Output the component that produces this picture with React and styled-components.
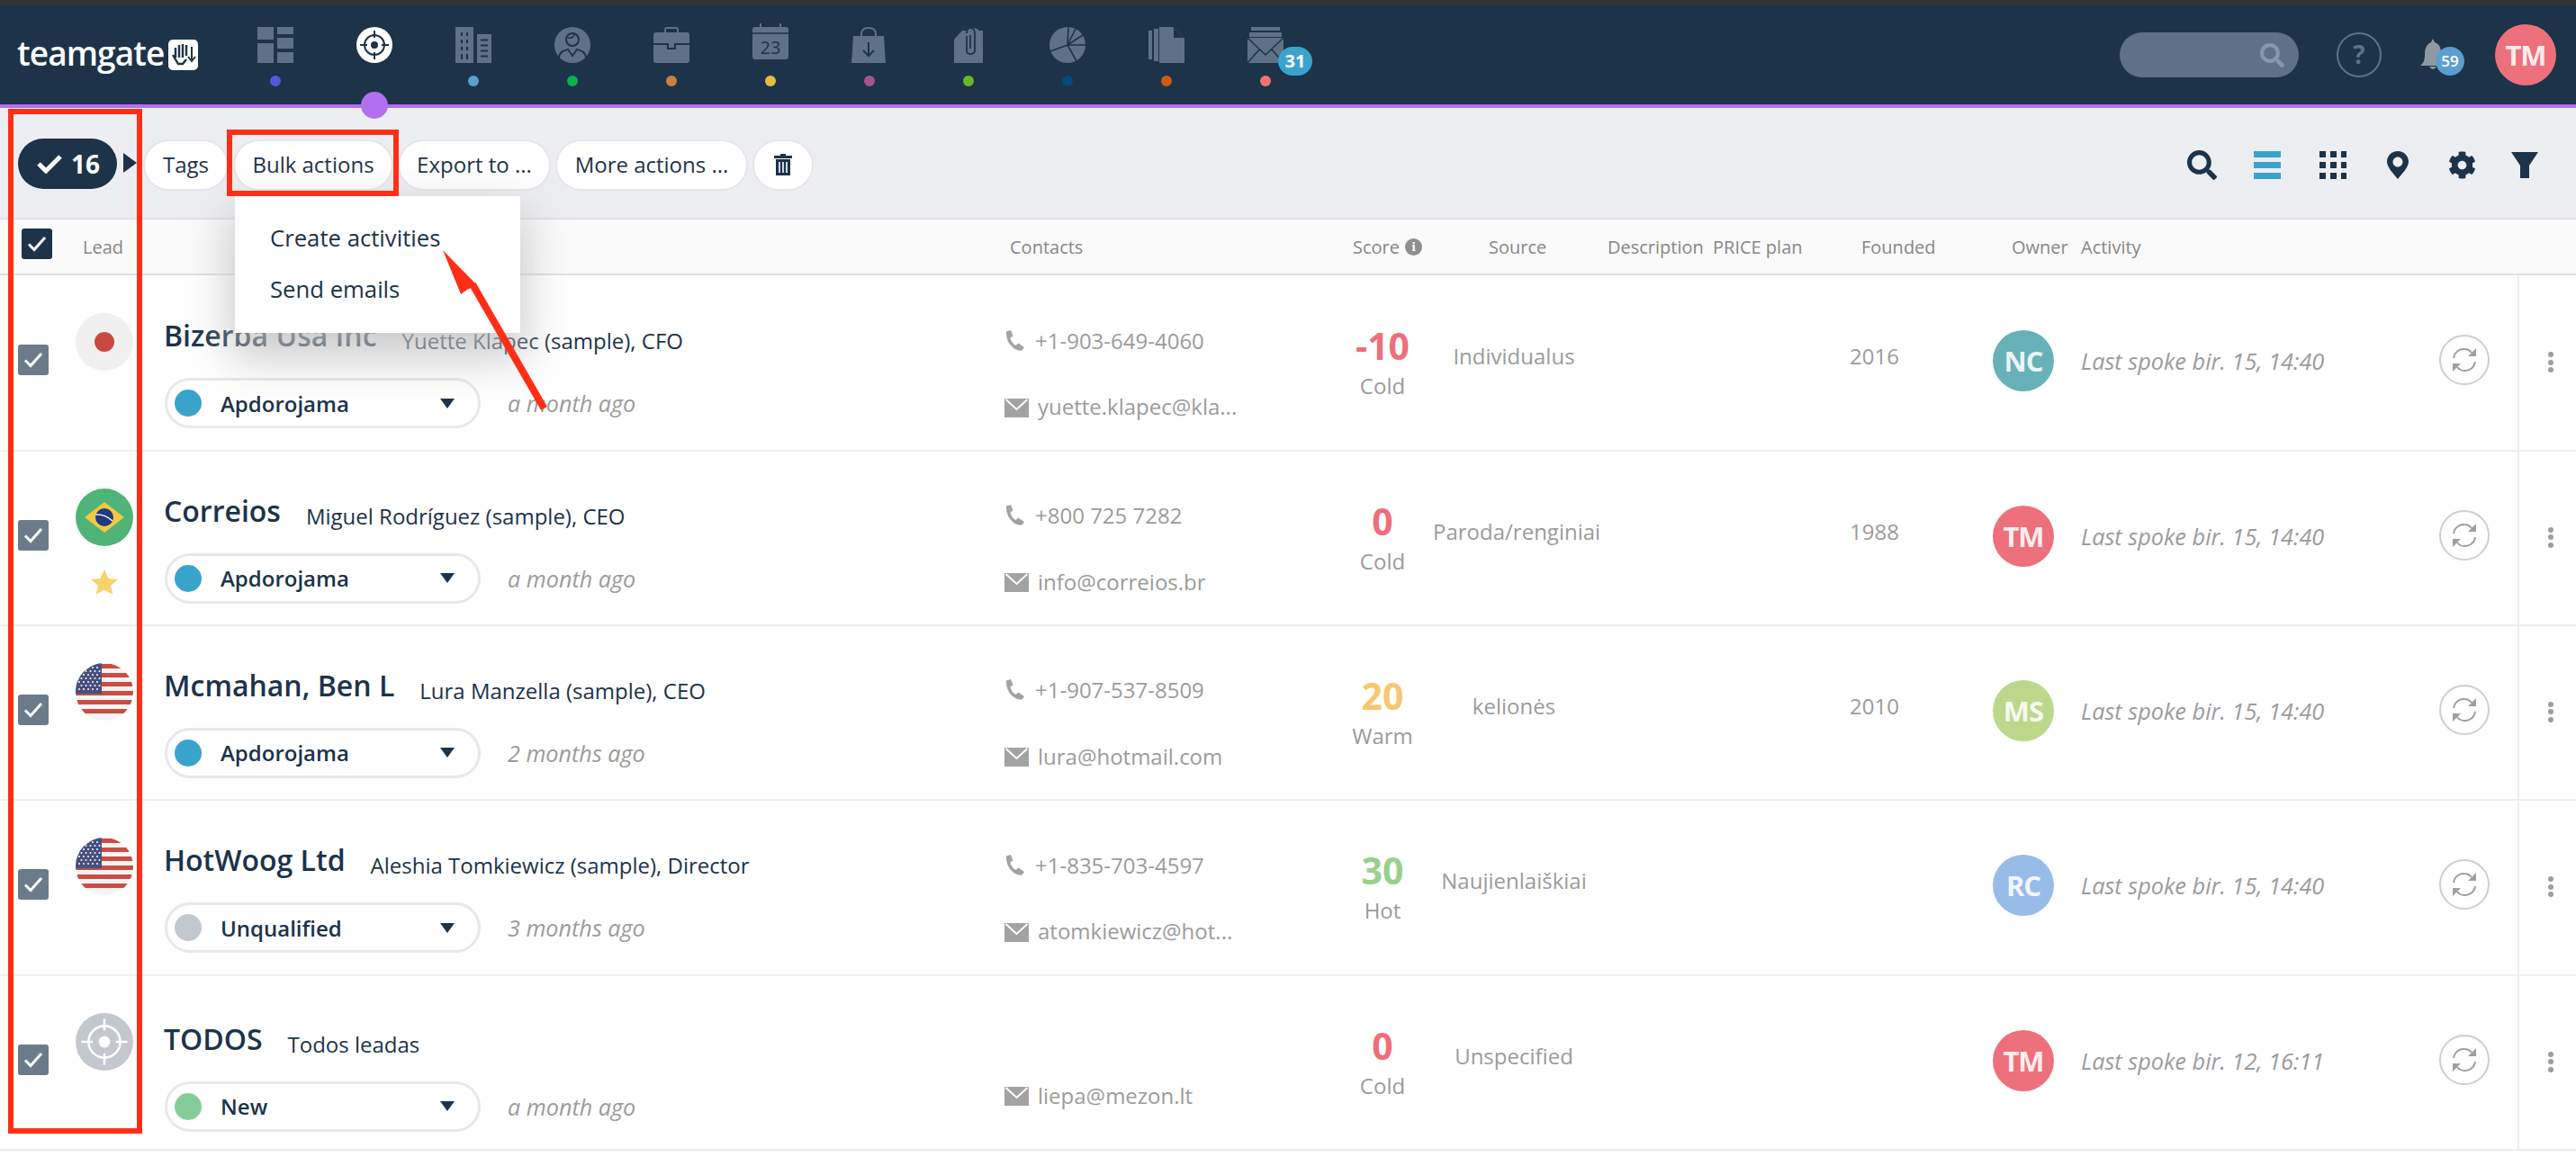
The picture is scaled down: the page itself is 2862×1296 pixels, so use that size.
import React from 'react';
import styled, { createGlobalStyle } from 'styled-components';
import { FaSearch, FaCog } from 'react-icons/fa';

const navy = '#1c3349';
const slate = '#5d7286';
const grey = '#9b9b9b';
const red = '#ff2f17';

const GlobalStyle = createGlobalStyle`
  html, body {
    margin: 0;
    padding: 0;
    background: #fff;
    overflow: hidden;
  }
  body {
    font-family: "Open Sans", "Liberation Sans", sans-serif;
    color: ${navy};
  }
  * { box-sizing: border-box; }
`;

const Page = styled.div`
  position: relative;
  width: 2862px;
  height: 1296px;
  overflow: hidden;
`;

const TopStrip = styled.div`
  height: 6px;
  background: #333;
`;

const Navbar = styled.header`
  height: 114px;
  display: flex;
  align-items: flex-start;
  background: ${navy};
  border-bottom: 4px solid #b26fee;
`;

const Logo = styled.div`
  width: 251px;
  padding: 30px 0 0 19px;
  display: flex;
  align-items: flex-start;
  gap: 5px;
  color: #fff;
  font-family: "Open Sans", sans-serif;
  font-size: 37px;
  font-weight: 600;
  line-height: 46px;
  letter-spacing: -0.9px;
`;

const LogoMark = styled.svg`
  width: 33px;
  height: 34px;
  margin-top: 8px;
  flex: none;
`;

const NavItem = styled.div`
  position: relative;
  width: 110px;
  height: 110px;
  padding-top: 24px;
  display: flex;
  flex-direction: column;
  align-items: center;
`;

const NavIcon = styled.svg`
  width: 40px;
  height: 40px;
  overflow: visible;
  flex: none;
`;

const NavDot = styled.span`
  width: 12px;
  height: 12px;
  margin-top: 14px;
  border-radius: 50%;
  background: ${(p) => p.$color};
`;

const ActiveDot = styled.span`
  position: absolute;
  left: 40px;
  top: 96px;
  width: 30px;
  height: 30px;
  border-radius: 50%;
  background: #b26fee;
  z-index: 3;
`;

const MailBadge = styled.span`
  position: absolute;
  left: 69px;
  top: 46px;
  width: 38px;
  height: 32px;
  border-radius: 16px;
  background: #3aa3cb;
  color: #fff;
  font-size: 20px;
  font-weight: 700;
  line-height: 32px;
  text-align: center;
`;

const NavRight = styled.div`
  margin-left: auto;
  height: 110px;
  padding-right: 22px;
  display: flex;
  align-items: center;
`;

const SearchPill = styled.div`
  width: 199px;
  height: 50px;
  padding-right: 16px;
  display: flex;
  align-items: center;
  justify-content: flex-end;
  border-radius: 25px;
  background: ${slate};
  color: #8798a8;
  font-size: 27px;
`;

const HelpCircle = styled.div`
  width: 50px;
  height: 50px;
  margin-left: 42px;
  border: 2px solid ${slate};
  border-radius: 50%;
  color: ${slate};
  font-size: 28px;
  font-weight: 700;
  line-height: 45px;
  text-align: center;
`;

const BellWrap = styled.div`
  position: relative;
  width: 51px;
  height: 44px;
  margin: 8px 34px 0 41px;
`;

const BellBadge = styled.span`
  position: absolute;
  left: 19px;
  top: 9px;
  width: 32px;
  height: 32px;
  border-radius: 50%;
  background: #5b9fd0;
  color: #fff;
  font-size: 17px;
  font-weight: 600;
  line-height: 32px;
  text-align: center;
`;

const Avatar = styled.div`
  width: 68px;
  height: 68px;
  flex: none;
  border-radius: 50%;
  background: ${(p) => p.$color};
  color: rgba(255, 255, 255, 0.9);
  font-size: 31px;
  font-weight: 700;
  line-height: 68px;
  letter-spacing: -1px;
  text-align: center;
`;

const Toolbar = styled.section`
  position: relative;
  z-index: 2;
  height: 124px;
  padding: 34px 0 0 20px;
  display: flex;
  align-items: flex-start;
  background: #edeef2;
  border-bottom: 2px solid #dfdfe6;
`;

const CountPill = styled.div`
  width: 110px;
  height: 56px;
  padding-left: 20px;
  display: flex;
  align-items: center;
  gap: 9px;
  border-radius: 28px;
  background: ${navy};
  color: #fff;
  font-size: 28px;
  font-weight: 700;
`;

const CountArrow = styled.span`
  width: 0;
  height: 0;
  margin: 16px 9px 0 7px;
  border-top: 11px solid transparent;
  border-bottom: 11px solid transparent;
  border-left: 15px solid ${navy};
`;

const ActionGroup = styled.div`
  margin-top: 3px;
  display: flex;
  gap: 9px;
`;

const ActionWrap = styled.div`
  position: relative;
`;

const ActionButton = styled.div`
  width: ${(p) => p.$width}px;
  height: 53px;
  padding-bottom: 2px;
  display: flex;
  align-items: center;
  justify-content: center;
  border-radius: 27px;
  background: #fff;
  box-shadow: 0 0 0 2px #e6e6ea;
  color: ${navy};
  font-size: 24px;
  white-space: nowrap;
`;

const ToolIcons = styled.div`
  margin: 13px 0 0 auto;
  padding-right: 22px;
  display: flex;
  align-items: flex-start;
`;

const ToolSlot = styled.div`
  width: ${(p) => p.$width}px;
  height: 33px;
  display: flex;
  align-items: center;
  justify-content: center;
  color: ${navy};
  font-size: ${(p) => p.$size || 32}px;
`;

const Menu = styled.div`
  position: absolute;
  left: 0;
  top: 61px;
  width: 317px;
  height: 152px;
  padding: 18px 0 0 39px;
  background: #fff;
  box-shadow: 0 22px 46px 6px rgba(190, 190, 190, 0.8);
  z-index: 4;
`;

const MenuItem = styled.div`
  height: 57px;
  color: ${navy};
  font-size: 25.7px;
  line-height: 57px;
  white-space: nowrap;
`;

const TableHead = styled.div`
  height: 62px;
  padding-left: 24px;
  display: flex;
  align-items: center;
  background: #fafafa;
  border-bottom: 2px solid #dfdfe6;
  color: #878787;
  font-size: 20px;
`;

const HeadCheck = styled.div`
  width: 34px;
  height: 34px;
  margin: -6px 34px 0 0;
  display: flex;
  align-items: center;
  justify-content: center;
  flex: none;
  border-radius: 3px;
  background: ${navy};
`;

const HeadCell = styled.div`
  width: ${(p) => p.$width}px;
  flex: none;
  display: flex;
  align-items: center;
  gap: 6px;
  white-space: nowrap;
`;

const InfoDot = styled.span`
  width: 19px;
  height: 19px;
  border-radius: 50%;
  background: #8f8f8f;
  color: #fff;
  font-family: "Liberation Serif", serif;
  font-size: 15px;
  font-weight: 700;
  line-height: 19px;
  text-align: center;
`;

const RowList = styled.div`
  padding-top: 1.4px;
`;

const Row = styled.div`
  height: 194.3px;
  display: grid;
  grid-template-columns: 84px 98px 934px 364px 112px 180px 283px 159px 98px 398px 87px 65px;
  border-bottom: 2px solid #eeeef3;
`;

const CheckCell = styled.div`
  padding: 76px 0 0 20px;
`;

const RowCheck = styled.div`
  width: 34px;
  height: 34px;
  display: flex;
  align-items: center;
  justify-content: center;
  border-radius: 3px;
  background: #6b7b8c;
`;

const FlagCell = styled.div`
  padding-top: 41px;
  display: flex;
  flex-direction: column;
  align-items: flex-start;
`;

const Flag = styled.svg`
  width: 64px;
  height: 64px;
  flex: none;
`;

const Star = styled.svg`
  width: 30px;
  height: 28px;
  margin: 26px 0 0 17px;
`;

const LeadCell = styled.div`
  padding-top: ${(p) => (p.$low ? 49 : 45)}px;
`;

const NameLine = styled.div`
  height: 42px;
  display: flex;
  align-items: flex-start;
  gap: 28px;
  white-space: nowrap;
`;

const LeadName = styled.span`
  font-size: 32px;
  font-weight: 600;
  line-height: 42px;
  color: ${navy};
`;

const Person = styled.span`
  margin-top: 6px;
  font-size: 24px;
  line-height: 42px;
  color: ${navy};
`;

const StatusLine = styled.div`
  margin-top: ${(p) => (p.$low ? 26 : 26)}px;
  display: flex;
  align-items: center;
  gap: 30px;
`;

const StatusPill = styled.div`
  width: 351px;
  height: 56px;
  margin-left: 1px;
  padding: 0 26px 0 8px;
  display: flex;
  align-items: center;
  border: 3px solid #e8e8ec;
  border-radius: 28px;
  color: ${navy};
  font-size: 24px;
  font-weight: 600;
`;

const StatusDot = styled.span`
  width: 30px;
  height: 30px;
  margin-right: 21px;
  border-radius: 50%;
  background: ${(p) => p.$color};
`;

const Caret = styled.span`
  width: 0;
  height: 0;
  margin-left: auto;
  border-left: 8px solid transparent;
  border-right: 8px solid transparent;
  border-top: 11px solid ${navy};
`;

const TimeAgo = styled.span`
  color: ${grey};
  font-size: 25.2px;
  font-style: italic;
`;

const ContactCell = styled.div`
  display: flex;
  flex-direction: column;
  padding-top: ${(p) => (p.$low ? 41 : 53)}px;
  color: ${grey};
  font-size: 24px;
`;

const ContactLine = styled.div`
  height: 36px;
  margin-bottom: 37.5px;
  display: flex;
  align-items: center;
  gap: ${(p) => p.$gap}px;
  white-space: nowrap;
`;

const ScoreCell = styled.div`
  padding-top: 49px;
  display: flex;
  flex-direction: column;
  align-items: center;
  color: ${grey};
  font-size: 24px;
`;

const ScoreValue = styled.div`
  height: 56px;
  color: ${(p) => p.$color};
  font-size: 41px;
  font-weight: 700;
  line-height: 56px;
`;

const Plain = styled.div`
  padding-top: 71px;
  color: ${grey};
  font-size: 24px;
  line-height: 36px;
  text-align: ${(p) => p.$align || 'left'};
  white-space: nowrap;
`;

const OwnerCell = styled.div`
  padding-top: 60px;
`;

const ActivityCell = styled.div`
  padding-top: 76px;
  color: ${grey};
  font-size: 25.3px;
  font-style: italic;
  line-height: 36px;
  white-space: nowrap;
`;

const SyncCell = styled.div`
  padding-top: 65px;
`;

const SyncCircle = styled.div`
  width: 56px;
  height: 56px;
  display: flex;
  align-items: center;
  justify-content: center;
  border: 2px solid #cfcfd3;
  border-radius: 50%;
`;

const MenuCell = styled.div`
  padding: 84px 0 0 7px;
  display: flex;
  flex-direction: column;
  align-items: center;
  gap: 2.5px;
  border-left: 2px solid #eeeef3;
`;

const MenuDot = styled.span`
  width: 6px;
  height: 6px;
  border-radius: 50%;
  background: #9d9d9d;
`;

const ColumnMark = styled.div`
  position: absolute;
  left: 9px;
  top: 121px;
  width: 149px;
  height: 1139px;
  border: 6px solid ${red};
  z-index: 6;
`;

const BulkMark = styled.div`
  position: absolute;
  left: 252px;
  top: 144px;
  width: 191px;
  height: 74px;
  border: 6px solid ${red};
  z-index: 6;
`;

const Arrow = styled.svg`
  position: absolute;
  left: 480px;
  top: 270px;
  width: 140px;
  height: 195px;
  z-index: 6;
`;

const TICK = (
  <svg width="22" height="18" viewBox="0 0 22 18">
    <path d="M2 9.5 L8 15.5 L20 2" fill="none" stroke="#fff" strokeWidth="3" />
  </svg>
);

const DashIcon = () => (
  <NavIcon viewBox="0 0 40 40" fill={slate}>
    <rect x="0" y="0" width="18" height="14" />
    <rect x="0" y="18" width="18" height="22" />
    <rect x="22" y="0" width="18" height="8" />
    <rect x="22" y="12" width="18" height="12" />
    <rect x="22" y="28" width="18" height="12" />
  </NavIcon>
);

const TargetIcon = ({ bg = '#fff', fg = navy, thin }) => (
  <>
    <circle cx="20" cy="20" r="20" fill={bg} />
    <circle cx="20" cy="20" r="11" fill="none" stroke={fg} strokeWidth={thin ? 1.6 : 2} />
    <circle cx="20" cy="20" r="4" fill={fg} />
    <path d="M20 4V12 M20 28V36 M4 20H12 M28 20H36" stroke={fg} strokeWidth={thin ? 1.6 : 2} />
  </>
);

const BuildingIcon = () => (
  <NavIcon viewBox="0 0 40 40">
    <rect x="0" y="0" width="20" height="40" fill={slate} />
    <rect x="24" y="8" width="16" height="32" fill={slate} />
    <path d="M7 6V10 M13 6V10 M7 14V18 M13 14V18 M7 22V26 M13 22V26 M7 30V36 M13 30V36" stroke={navy} strokeWidth="2" />
    <path d="M28 14.5H36 M28 20.5H36 M28 26.5H36 M28 32.500H36" stroke={navy} strokeWidth="2" />
  </NavIcon>
);

const ContactIcon = () => (
  <NavIcon viewBox="0 0 40 40">
    <circle cx="20" cy="20" r="20" fill={slate} />
    <circle cx="20" cy="14" r="7" fill="none" stroke={navy} strokeWidth="2" />
    <path d="M15 12 C18 13 22 11 22 8" fill="none" stroke={navy} strokeWidth="1.6" />
    <path d="M5 34 C6 27 11 26 15 25 L20 32 L25 25 C29 26 34 27 35 34" fill="none" stroke={navy} strokeWidth="2" />
  </NavIcon>
);

const CaseIcon = () => (
  <NavIcon viewBox="0 0 40 40">
    <path d="M13 6V3 Q13 1 15 1 H25 Q27 1 27 3 V6" fill="none" stroke={slate} strokeWidth="2" />
    <rect x="0" y="6" width="40" height="34" rx="3" fill={slate} />
    <path d="M0 19H16V24H24V19H40" fill="none" stroke={navy} strokeWidth="2" />
  </NavIcon>
);

const CalendarIcon = () => (
  <NavIcon viewBox="0 0 40 40">
    <path d="M9 -4V2 M31 -4V2" stroke={slate} strokeWidth="2" />
    <rect x="0" y="0" width="40" height="36" rx="3" fill={slate} />
    <path d="M0 7H40" stroke={navy} strokeWidth="1.6" />
    <text x="20" y="30" textAnchor="middle" fill={navy} fontSize="20" fontFamily="Open Sans">23</text>
  </NavIcon>
);

const BagIcon = () => (
  <NavIcon viewBox="0 0 40 40">
    <path d="M2 10 H36 L38 40 H0 Z" fill={slate} />
    <path d="M11 10 V8 Q11 1 19 1 Q27 1 27 8 V10" fill="none" stroke={slate} strokeWidth="2" />
    <path d="M19 17V32 M13 26 L19 32 L25 26" fill="none" stroke={navy} strokeWidth="2" />
  </NavIcon>
);

const ClipIcon = () => (
  <NavIcon viewBox="0 0 40 40">
    <path d="M4 14 L13 4 H36 V40 H4 Z" fill={slate} />
    <path d="M18 6 Q18 1 24 1 Q32 1 32 6 V4 H36 V6 H32" fill={slate} />
    <path d="M18 10 V26 Q18 30 22 30 Q27 30 27 26 V7 Q27 1 22 1 Q18 1 18 7 M22 9 V24" fill="none" stroke={navy} strokeWidth="1.8" />
  </NavIcon>
);

const PieIcon = () => (
  <NavIcon viewBox="0 0 40 40">
    <circle cx="20" cy="20" r="20" fill={slate} />
    <path d="M20 20 L21 0 M20 20 L29 2 M20 20 L37 9 M20 20 H40 M20 20 L30 38 M20 20 L1 27" stroke={navy} strokeWidth="1.6" />
  </NavIcon>
);

const DocsIcon = () => (
  <NavIcon viewBox="0 0 40 40">
    <rect x="0" y="4" width="4" height="32" fill={slate} />
    <rect x="6" y="2" width="5" height="36" fill={slate} />
    <path d="M12 0 H27 L40 13 V40 H12 Z" fill={slate} />
    <path d="M28 1 V12 H39 Z" fill={navy} />
  </NavIcon>
);

const MailNavIcon = () => (
  <NavIcon viewBox="0 0 40 40">
    <rect x="4" y="0" width="32" height="4" fill={slate} />
    <rect x="2" y="6" width="36" height="5" fill={slate} />
    <rect x="0" y="12" width="40" height="28" fill={slate} />
    <path d="M0 12 L20 31 L40 12 M0 40 L13 25 M40 40 L27 25" fill="none" stroke={navy} strokeWidth="1.6" />
  </NavIcon>
);

const NAV = [
  { icon: <DashIcon />, color: '#4f5bd5' },
  { icon: <NavIcon viewBox="0 0 40 40"><TargetIcon /></NavIcon>, active: true },
  { icon: <BuildingIcon />, color: '#5b9fd0' },
  { icon: <ContactIcon />, color: '#0cb14f' },
  { icon: <CaseIcon />, color: '#c98044' },
  { icon: <CalendarIcon />, color: '#dfc03f' },
  { icon: <BagIcon />, color: '#a0558f' },
  { icon: <ClipIcon />, color: '#6eb526' },
  { icon: <PieIcon />, color: '#044a7c' },
  { icon: <DocsIcon />, color: '#cb5a12' },
  { icon: <MailNavIcon />, color: '#f27171', badge: '31' },
];

const USFlag = () => {
  const stars = [];
  for (let r = 0; r < 7; r++) {
    for (let c = 0; c < 5; c++) {
      stars.push(<circle key={r + '-' + c} cx={4 + c * 5 + (r % 2) * 2.5} cy={5 + r * 4} r="1" fill="#fff" />);
    }
  }
  return (
    <Flag viewBox="0 0 64 64">
      <defs>
        <clipPath id="usclip"><circle cx="32" cy="32" r="32" /></clipPath>
      </defs>
      <g clipPath="url(#usclip)">
        <rect width="64" height="64" fill="#f4f4f4" />
        {[0, 1, 2, 3, 4, 5].map((i) => (
          <rect key={i} x="0" y={1 + i * 10} width="64" height="5" fill="#cc4b42" />
        ))}
        <rect x="0" y="0" width="29" height="34" fill="#45507f" />
        {stars}
      </g>
    </Flag>
  );
};

const BRFlag = () => (
  <Flag viewBox="0 0 64 64">
    <circle cx="32" cy="32" r="32" fill="#4fb477" />
    <path d="M32 15 L54 32 L32 49 L10 32 Z" fill="#f5c842" />
    <circle cx="32" cy="32" r="10" fill="#1f3a7d" />
    <path d="M22.500 29 Q32 28 41 36" fill="none" stroke="#fff" strokeWidth="1.4" />
  </Flag>
);

const DotFlag = () => (
  <Flag viewBox="0 0 64 64">
    <circle cx="32" cy="32" r="32" fill="#f0f0f0" />
    <circle cx="32" cy="32" r="11" fill="#c9483f" />
  </Flag>
);

const TodoFlag = () => (
  <Flag viewBox="0 0 40 40">
    <TargetIcon bg="#c3c8ce" fg="#fff" thin />
  </Flag>
);

const PhoneIcon = () => (
  <svg width="23" height="23" viewBox="0 0 23 23">
    <path d="M2 1.5 L7 0 L9.500 6.500 L6.500 8.500 C7 12 9.500 15.500 12.500 17 L15.500 14.500 L22 19 L19.500 22.500 C11.500 24 1 14 2 1.500 Z" fill="#a3a3a3" />
  </svg>
);

const MailIcon = () => (
  <svg width="27" height="24" viewBox="0 0 27 24">
    <rect x="0" y="3" width="27" height="21" fill="#a3a3a3" />
    <path d="M1.500 4 L13.500 15 L25.500 4" fill="none" stroke="#fff" strokeWidth="2" />
  </svg>
);

const SyncIcon = () => (
  <svg width="30" height="30" viewBox="0 0 30 30" fill="none">
    <path d="M3 13 C4 6 10 2.500 15 3 C18 3 21 4.500 23 7" stroke="#9f9f9f" strokeWidth="2" />
    <path d="M28 2 V11 H19 Z" fill="#9f9f9f" />
    <path d="M27 17 C26 24 20 27.500 15 27 C12 27 9 25.500 7 23" stroke="#9f9f9f" strokeWidth="2" />
    <path d="M2 28 V19 H11 Z" fill="#9f9f9f" />
  </svg>
);

const LEADS = [
  { flag: <DotFlag />, name: 'Bizerba Usa Inc', person: 'Yuette Klapec (sample), CFO', status: 'Apdorojama', dot: '#3aa3cb', time: 'a month ago', phone: '+1-903-649-4060', email: 'yuette.klapec@kla...', score: '-10', scoreColor: '#ef6e7b', label: 'Cold', source: 'Individualus', founded: '2016', owner: 'NC', ownerColor: '#67b2b8', activity: 'Last spoke bir. 15, 14:40' },
  { flag: <BRFlag />, star: true, name: 'Correios', person: 'Miguel Rodríguez (sample), CEO', status: 'Apdorojama', dot: '#3aa3cb', time: 'a month ago', phone: '+800 725 7282', email: 'info@correios.br', score: '0', scoreColor: '#ef6e7b', label: 'Cold', source: 'Paroda/renginiai', founded: '1988', owner: 'TM', ownerColor: '#ee707c', activity: 'Last spoke bir. 15, 14:40' },
  { flag: <USFlag />, name: 'Mcmahan, Ben L', person: 'Lura Manzella (sample), CEO', status: 'Apdorojama', dot: '#3aa3cb', time: '2 months ago', phone: '+1-907-537-8509', email: 'lura@hotmail.com', score: '20', scoreColor: '#f8c76f', label: 'Warm', source: 'kelionės', founded: '2010', owner: 'MS', ownerColor: '#bcd88b', activity: 'Last spoke bir. 15, 14:40' },
  { flag: <USFlag />, name: 'HotWoog Ltd', person: 'Aleshia Tomkiewicz (sample), Director', status: 'Unqualified', dot: '#c3c8ce', time: '3 months ago', phone: '+1-835-703-4597', email: 'atomkiewicz@hot...', score: '30', scoreColor: '#98d18c', label: 'Hot', source: 'Naujienlaiškiai', founded: '', owner: 'RC', ownerColor: '#98bce8', activity: 'Last spoke bir. 15, 14:40' },
  { flag: <TodoFlag />, low: true, name: 'TODOS', person: 'Todos leadas', status: 'New', dot: '#86cc9b', time: 'a month ago', phone: '', email: 'liepa@mezon.lt', score: '0', scoreColor: '#ef6e7b', label: 'Cold', source: 'Unspecified', founded: '', owner: 'TM', ownerColor: '#ee707c', activity: 'Last spoke bir. 12, 16:11' },
];

function LeadRow({ lead }) {
  return (
    <Row>
      <CheckCell><RowCheck>{TICK}</RowCheck></CheckCell>
      <FlagCell>
        {lead.flag}
        {lead.star && (
          <Star viewBox="0 0 30 28">
            <path d="M15 0 L19.500 10 L30 11 L22 18 L24.500 28 L15 22.500 L5.500 28 L8 18 L0 11 L10.500 10 Z" fill="#f9d26b" />
          </Star>
        )}
      </FlagCell>
      <LeadCell $low={lead.low}>
        <NameLine>
          <LeadName>{lead.name}</LeadName>
          <Person>{lead.person}</Person>
        </NameLine>
        <StatusLine $low={lead.low}>
          <StatusPill>
            <StatusDot $color={lead.dot} />
            {lead.status}
            <Caret />
          </StatusPill>
          <TimeAgo>{lead.time}</TimeAgo>
        </StatusLine>
      </LeadCell>
      <ContactCell $low={lead.low}>
        <ContactLine $gap={11}>{lead.phone && <PhoneIcon />}{lead.phone}</ContactLine>
        <ContactLine $gap={10}><MailIcon />{lead.email}</ContactLine>
      </ContactCell>
      <ScoreCell>
        <ScoreValue $color={lead.scoreColor}>{lead.score}</ScoreValue>
        {lead.label}
      </ScoreCell>
      <Plain $align="center">{lead.source}</Plain>
      <div />
      <Plain>{lead.founded}</Plain>
      <OwnerCell><Avatar $color={lead.ownerColor}>{lead.owner}</Avatar></OwnerCell>
      <ActivityCell>{lead.activity}</ActivityCell>
      <SyncCell><SyncCircle><SyncIcon /></SyncCircle></SyncCell>
      <MenuCell><MenuDot /><MenuDot /><MenuDot /></MenuCell>
    </Row>
  );
}

export default function App() {
  return (
    <Page>
      <GlobalStyle />
      <TopStrip />
      <Navbar>
        <Logo>
          <span>teamgate</span>
          <LogoMark viewBox="0 0 33 34">
            <rect width="33" height="34" rx="5" fill="#fff" />
            <path d="M8 9V20 M12 6V20 M16 5V20 M20 6V18 M5 17 L11 27 H16 L20 22" fill="none" stroke={navy} strokeWidth="2.4" />
            <path d="M26 8V22 M22 19 L26 24 L30 19" fill="none" stroke={navy} strokeWidth="2" />
          </LogoMark>
        </Logo>
        {NAV.map((item, i) => (
          <NavItem key={i}>
            {item.icon}
            {item.color && <NavDot $color={item.color} />}
            {item.active && <ActiveDot />}
            {item.badge && <MailBadge>{item.badge}</MailBadge>}
          </NavItem>
        ))}
        <NavRight>
          <SearchPill><FaSearch /></SearchPill>
          <HelpCircle>?</HelpCircle>
          <BellWrap>
            <svg width="31" height="36" viewBox="0 0 31 36">
              <path d="M16 0 L18 4 C24 6 25 11 25 17 C25 23 27 27 31 30 H2 C6 27 7 23 7 17 C7 11 9 6 14 4 Z" fill="#8e99a4" />
              <path d="M12 31 Q16 37 20 31 Z" fill="#8e99a4" />
            </svg>
            <BellBadge>59</BellBadge>
          </BellWrap>
          <Avatar $color="#ee707c">TM</Avatar>
        </NavRight>
      </Navbar>

      <Toolbar>
        <CountPill>
          <svg width="30" height="22" viewBox="0 0 30 22">
            <path d="M3 11 L11 19 L27 3" fill="none" stroke="#fff" strokeWidth="5" />
          </svg>
          16
        </CountPill>
        <CountArrow />
        <ActionGroup>
          <ActionButton $width={91}>Tags</ActionButton>
          <ActionWrap>
            <ActionButton $width={174}>Bulk actions</ActionButton>
            <Menu>
              <MenuItem>Create activities</MenuItem>
              <MenuItem>Send emails</MenuItem>
            </Menu>
          </ActionWrap>
          <ActionButton $width={166}>Export to ...</ActionButton>
          <ActionButton $width={210}>More actions ...</ActionButton>
          <ActionButton $width={64}>
            <svg width="20" height="24" viewBox="0 0 20 24" fill={navy}>
              <path d="M7 0H13V2H20V5H0V2H7Z" />
              <path d="M2 6H18V24H2Z" />
              <path d="M6 9V21 M10 9V21 M14 9V21" stroke="#fff" strokeWidth="1.6" />
            </svg>
          </ActionButton>
        </ActionGroup>
        <ToolIcons>
          <ToolSlot $width={72} $size={33}><FaSearch /></ToolSlot>
          <ToolSlot $width={72.5}>
            <svg width="30" height="31" viewBox="0 0 30 31" fill="#3aa3cb">
              <rect width="30" height="7" />
              <rect y="12" width="30" height="7" />
              <rect y="24" width="30" height="7" />
            </svg>
          </ToolSlot>
          <ToolSlot $width={73}>
            <svg width="30" height="31" viewBox="0 0 30 31" fill={navy}>
              {[0, 12, 24].map((y) => [0, 12, 24].map((x) => (
                <rect key={x + '-' + y} x={x} y={y} width="7" height="7" />
              )))}
            </svg>
          </ToolSlot>
          <ToolSlot $width={72}>
            <svg width="24" height="31" viewBox="0 0 24 31">
              <path d="M12 0 C5 0 0 5 0 12 C0 18 8 26 12 31 C16 26 24 18 24 12 C24 5 19 0 12 0 Z M12 6.500 C15 6.500 17.500 9 17.500 12 C17.500 15 15 17.500 12 17.500 C9 17.500 6.500 15 6.500 12 C6.500 9 9 6.500 12 6.500 Z" fill={navy} fillRule="evenodd" />
            </svg>
          </ToolSlot>
          <ToolSlot $width={70} $size={31}><FaCog /></ToolSlot>
          <ToolSlot $width={70}>
            <svg width="30" height="30" viewBox="0 0 30 30" fill={navy}>
              <path d="M0 0 H30 L20 15 V29 H10 V15 Z" />
            </svg>
          </ToolSlot>
        </ToolIcons>
      </Toolbar>

      <TableHead>
        <HeadCheck>{TICK}</HeadCheck>
        <HeadCell $width={1030}>Lead</HeadCell>
        <HeadCell $width={381}>Contacts</HeadCell>
        <HeadCell $width={151}>Score<InfoDot>i</InfoDot></HeadCell>
        <HeadCell $width={132}>Source</HeadCell>
        <HeadCell $width={117}>Description</HeadCell>
        <HeadCell $width={165}>PRICE plan</HeadCell>
        <HeadCell $width={167}>Founded</HeadCell>
        <HeadCell $width={77}>Owner</HeadCell>
        <HeadCell $width={100}>Activity</HeadCell>
      </TableHead>

      <RowList>
        {LEADS.map((lead) => <LeadRow key={lead.name} lead={lead} />)}
      </RowList>

      <ColumnMark />
      <BulkMark />
      <Arrow viewBox="0 0 140 195">
        <path d="M124.500 184 L45 46" stroke={red} strokeWidth="8" fill="none" />
        <path d="M12 8 L50 47 L39 52 L32 57 Z" fill={red} />
      </Arrow>
    </Page>
  );
}
